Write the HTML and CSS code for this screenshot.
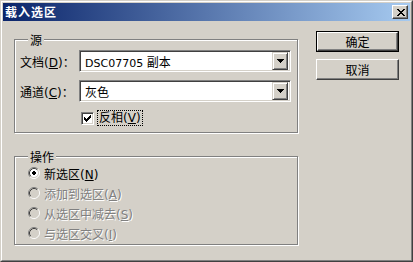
FILE: index.html
```html
<!DOCTYPE html>
<html lang="zh-CN">
<head>
<meta charset="utf-8">
<title>载入选区</title>
<link rel="stylesheet" href="styles.css">
</head>
<body>
<div class="window">
  <div class="frame">
    <div class="titlebar">
      <span class="title">载入选区</span>
      <span class="close"><svg width="8" height="7" viewBox="0 0 8 7"><path d="M0 0h2v1H0zM6 0h2v1H6zM1 1h2v1H1zM5 1h2v1H5zM2 2h4v1H2zM3 3h2v1H3zM2 4h4v1H2zM1 5h2v1H1zM5 5h2v1H5zM0 6h2v1H0zM6 6h2v1H6z" fill="#000"/></svg></span>
    </div>
    <div class="content">
      <div class="left">
        <div class="group g-source">
          <div class="legend">源</div>
          <div class="row first">
            <span class="lbl">文档(<u>D</u>)<span class="colon">：</span></span>
            <div class="combo"><span class="val">DSC07705 <span class="cjk">副本</span></span><span class="drop"><svg width="7" height="4" viewBox="0 0 7 4"><path d="M0 0h7v1H0zM1 1h5v1H1zM2 2h3v1H2zM3 3h1v1H3z" fill="#000"/></svg></span></div>
          </div>
          <div class="row second">
            <span class="lbl">通道(<u>C</u>)<span class="colon">：</span></span>
            <div class="combo"><span class="val"><span class="cjk">灰色</span></span><span class="drop"><svg width="7" height="4" viewBox="0 0 7 4"><path d="M0 0h7v1H0zM1 1h5v1H1zM2 2h3v1H2zM3 3h1v1H3z" fill="#000"/></svg></span></div>
          </div>
          <div class="checkrow">
            <span class="checkbox"><svg width="7" height="7" viewBox="0 0 7 7"><path d="M0 2h1v3H0zM1 3h1v3H1zM2 4h1v3H2zM3 3h1v3H3zM4 2h1v3H4zM5 1h1v3H5zM6 0h1v3H6z" fill="#000"/></svg></span>
            <span class="checklabel">反相(<u>V</u>)</span>
          </div>
        </div>
        <div class="group g-op">
          <div class="legend">操作</div>
          <div class="radio">
            <svg class="rb" width="12" height="12" viewBox="0 0 12 12"><circle cx="6" cy="6" r="4.2" fill="#fff"/><path d="M2.11 9.89A5.5 5.5 0 0 1 9.89 2.11" fill="none" stroke="#808080"/><path d="M9.89 2.11A5.5 5.5 0 0 1 2.11 9.89" fill="none" stroke="#fff"/><path d="M2.82 9.18A4.5 4.5 0 0 1 9.18 2.82" fill="none" stroke="#404040"/><path d="M9.18 2.82A4.5 4.5 0 0 1 2.82 9.18" fill="none" stroke="#d4d0c8"/><rect x="5" y="4" width="2" height="4" fill="#000"/><rect x="4" y="5" width="4" height="2" fill="#000"/></svg>
            <span class="rlabel">新选区(<u>N</u>)</span>
          </div>
          <div class="radio disabled">
            <svg class="rb" width="12" height="12" viewBox="0 0 12 12"><circle cx="6" cy="6" r="4.2" fill="#d4d0c8"/><path d="M2.11 9.89A5.5 5.5 0 0 1 9.89 2.11" fill="none" stroke="#808080"/><path d="M9.89 2.11A5.5 5.5 0 0 1 2.11 9.89" fill="none" stroke="#fff"/><path d="M2.82 9.18A4.5 4.5 0 0 1 9.18 2.82" fill="none" stroke="#404040"/><path d="M9.18 2.82A4.5 4.5 0 0 1 2.82 9.18" fill="none" stroke="#d4d0c8"/></svg>
            <span class="rlabel">添加到选区(<u>A</u>)</span>
          </div>
          <div class="radio disabled">
            <svg class="rb" width="12" height="12" viewBox="0 0 12 12"><circle cx="6" cy="6" r="4.2" fill="#d4d0c8"/><path d="M2.11 9.89A5.5 5.5 0 0 1 9.89 2.11" fill="none" stroke="#808080"/><path d="M9.89 2.11A5.5 5.5 0 0 1 2.11 9.89" fill="none" stroke="#fff"/><path d="M2.82 9.18A4.5 4.5 0 0 1 9.18 2.82" fill="none" stroke="#404040"/><path d="M9.18 2.82A4.5 4.5 0 0 1 2.82 9.18" fill="none" stroke="#d4d0c8"/></svg>
            <span class="rlabel">从选区中减去(<u>S</u>)</span>
          </div>
          <div class="radio disabled">
            <svg class="rb" width="12" height="12" viewBox="0 0 12 12"><circle cx="6" cy="6" r="4.2" fill="#d4d0c8"/><path d="M2.11 9.89A5.5 5.5 0 0 1 9.89 2.11" fill="none" stroke="#808080"/><path d="M9.89 2.11A5.5 5.5 0 0 1 2.11 9.89" fill="none" stroke="#fff"/><path d="M2.82 9.18A4.5 4.5 0 0 1 9.18 2.82" fill="none" stroke="#404040"/><path d="M9.18 2.82A4.5 4.5 0 0 1 2.82 9.18" fill="none" stroke="#d4d0c8"/></svg>
            <span class="rlabel">与选区交叉(<u>I</u>)</span>
          </div>
        </div>
      </div>
      <div class="right">
        <div class="btn default"><span class="btn-in">确定</span></div>
        <div class="btn"><span class="btn-in">取消</span></div>
      </div>
    </div>
  </div>
</div>
</body>
</html>
```
FILE: styles.css
```css
* { box-sizing: border-box; margin: 0; padding: 0; }
html, body { width: 413px; height: 262px; overflow: hidden; background: #d4d0c8; }
body {
  font-family: "DejaVu Sans", "Noto Sans CJK SC", sans-serif;
  font-size: 12px;
  color: #000;
}
u { text-underline-offset: 1px; }

.window {
  width: 413px;
  height: 262px;
  border: 1px solid;
  border-color: #d4d0c8 #404040 #404040 #d4d0c8;
  display: flex;
}
.frame {
  flex: 1;
  border: 1px solid;
  border-color: #fff #808080 #808080 #fff;
  padding: 1px;
  display: flex;
  flex-direction: column;
}
.titlebar {
  height: 18px;
  background: linear-gradient(to right, #0a246a, #a6caf0);
  display: flex;
  align-items: center;
  padding-left: 2px;
  padding-right: 2px;
}
.title {
  color: #fff;
  font-family: "Noto Sans CJK SC", sans-serif;
  font-weight: bold;
  font-size: 12px;
  letter-spacing: 1px;
  line-height: 14px;
}
.close {
  margin-left: auto;
  width: 16px;
  height: 14px;
  background: #d4d0c8;
  border: 1px solid;
  border-color: #fff #404040 #404040 #fff;
  box-shadow: inset -1px -1px 0 #808080;
  display: flex;
  align-items: center;
  justify-content: center;
  padding-left: 1px;
}
.close svg { display: block; }

.content {
  flex: 1;
  display: flex;
}
.left {
  padding-left: 11px;
  padding-top: 18px;
  width: 296px;
}
.group {
  width: 284px;
  border: 1px solid #808080;
  box-shadow: inset 1px 1px 0 #fff, 1px 1px 0 #fff;
}
.legend {
  width: fit-content;
  margin-top: -7px;
  margin-left: 13px;
  padding: 0 2px;
  background: #d4d0c8;
  font-family: "Noto Sans CJK SC", sans-serif;
  line-height: 13px;
  height: 13px;
}
.g-source { height: 94px; }
.row {
  display: flex;
  align-items: center;
  padding-left: 5px;
}
.row.first { margin-top: 4px; }
.row.second { margin-top: 8px; }
.lbl {
  width: 59px;
  white-space: nowrap;
}
.colon {
  font-family: "Noto Sans CJK TC", sans-serif;
}
.combo {
  width: 212px;
  height: 22px;
  background: #fff;
  border: 1px solid;
  border-color: #808080 #fff #fff #808080;
  box-shadow: inset 1px 1px 0 #404040, inset -1px -1px 0 #d4d0c8;
  display: flex;
  align-items: center;
  padding: 2px 2px 2px 5px;
}
.val { flex: 1; white-space: nowrap; font-size: 11px; }
.cjk { font-size: 12px; font-family: "Noto Sans CJK SC", sans-serif; }
.drop {
  width: 16px;
  height: 18px;
  background: #d4d0c8;
  border: 1px solid;
  border-color: #d4d0c8 #404040 #404040 #d4d0c8;
  box-shadow: inset 1px 1px 0 #fff, inset -1px -1px 0 #808080;
  display: flex;
  align-items: center;
  justify-content: center;
}
.drop svg { display: block; }
.checkrow {
  display: flex;
  align-items: center;
  margin-top: 9px;
  padding-left: 66px;
}
.checkbox {
  width: 13px;
  height: 13px;
  background: #fff;
  border: 1px solid;
  border-color: #808080 #fff #fff #808080;
  box-shadow: inset 1px 1px 0 #404040, inset -1px -1px 0 #d4d0c8;
  display: flex;
  align-items: center;
  justify-content: center;
}
.checkbox svg { display: block; }
.checklabel {
  margin-left: 4px;
  padding: 0 1px;
  outline: 1px dotted #000;
  line-height: 14px;
}

.g-op {
  margin-top: 23px;
  height: 89px;
}
.radio {
  height: 20px;
  display: flex;
  align-items: center;
  padding-left: 13px;
}
.rb { display: block; }
.rlabel {
  margin-left: 4px;
  white-space: nowrap;
}
.disabled .rlabel {
  color: #808080;
  text-shadow: 1px 1px 0 #fff;
}

.right {
  padding-left: 17px;
  padding-top: 10px;
  display: flex;
  flex-direction: column;
  gap: 7px;
}
.btn {
  width: 83px;
  height: 21px;
  background: #d4d0c8;
  border: 1px solid;
  border-color: #fff #404040 #404040 #fff;
  box-shadow: inset -1px -1px 0 #808080;
  display: flex;
}
.btn.default {
  border: 1px solid #000;
  box-shadow: none;
}
.btn-in {
  flex: 1;
  display: flex;
  align-items: center;
  justify-content: center;
  font-family: "Noto Sans CJK SC", sans-serif;
}
.btn.default .btn-in {
  border: 1px solid;
  border-color: #fff #404040 #404040 #fff;
  box-shadow: inset -1px -1px 0 #808080;
}
```
